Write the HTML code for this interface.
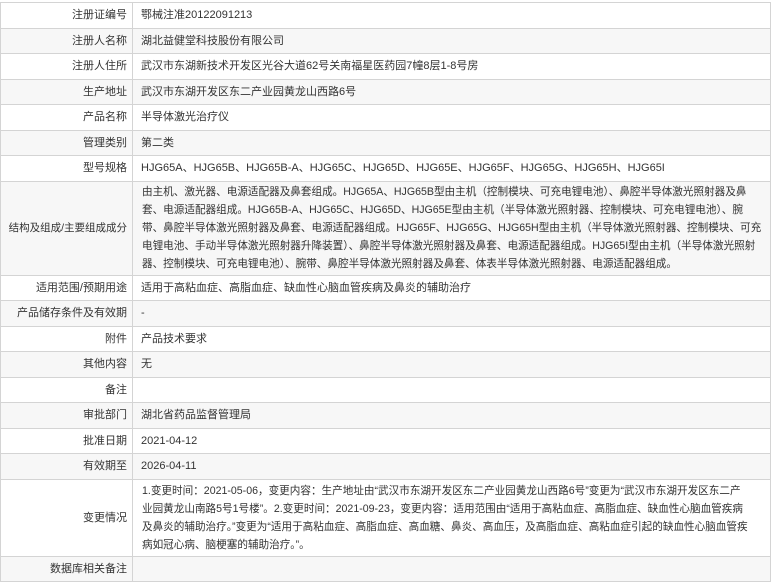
<!DOCTYPE html>
<html><head><meta charset="utf-8"><style>
body{margin:0;background:#fff;font-family:"Liberation Sans","Noto Sans CJK SC",sans-serif;font-size:11px;color:#333;}
table{position:absolute;left:0;top:2px;width:771px;border-collapse:collapse;table-layout:fixed;}
td{border:1px solid #d4d4d4;padding:0 8px;line-height:18px;vertical-align:middle;overflow:hidden;white-space:nowrap;}
td.l{text-align:right;padding:0 5px 0 0;}
td.t{font-size:10.6px;padding-left:9px;}
tr:nth-child(even) td{background:#f7f7f7;}
tr.r td{height:24.5px;}
</style></head><body>
<table>
<colgroup><col style="width:132px"><col></colgroup>
<tr class="r"><td class="l">注册证编号</td><td>鄂械注准20122091213</td></tr>
<tr class="r"><td class="l">注册人名称</td><td>湖北益健堂科技股份有限公司</td></tr>
<tr class="r"><td class="l">注册人住所</td><td>武汉市东湖新技术开发区光谷大道62号关南福星医药园7幢8层1-8号房</td></tr>
<tr class="r"><td class="l">生产地址</td><td>武汉市东湖开发区东二产业园黄龙山西路6号</td></tr>
<tr class="r"><td class="l">产品名称</td><td>半导体激光治疗仪</td></tr>
<tr class="r"><td class="l">管理类别</td><td>第二类</td></tr>
<tr class="r"><td class="l">型号规格</td><td>HJG65A、HJG65B、HJG65B-A、HJG65C、HJG65D、HJG65E、HJG65F、HJG65G、HJG65H、HJG65I</td></tr>
<tr><td class="l" style="height:93px;font-size:10.5px">结构及组成/主要组成成分</td><td class="t">由主机、激光器、电源适配器及鼻套组成。HJG65A、HJG65B型由主机（控制模块、可充电锂电池）、鼻腔半导体激光照射器及鼻<br>套、电源适配器组成。HJG65B-A、HJG65C、HJG65D、HJG65E型由主机（半导体激光照射器、控制模块、可充电锂电池）、腕<br>带、鼻腔半导体激光照射器及鼻套、电源适配器组成。HJG65F、HJG65G、HJG65H型由主机（半导体激光照射器、控制模块、可充<br>电锂电池、手动半导体激光照射器升降装置）、鼻腔半导体激光照射器及鼻套、电源适配器组成。HJG65I型由主机（半导体激光照射<br>器、控制模块、可充电锂电池）、腕带、鼻腔半导体激光照射器及鼻套、体表半导体激光照射器、电源适配器组成。</td></tr>
<tr class="r"><td class="l">适用范围/预期用途</td><td>适用于高粘血症、高脂血症、缺血性心脑血管疾病及鼻炎的辅助治疗</td></tr>
<tr class="r"><td class="l">产品储存条件及有效期</td><td>-</td></tr>
<tr class="r"><td class="l">附件</td><td>产品技术要求</td></tr>
<tr class="r"><td class="l">其他内容</td><td>无</td></tr>
<tr class="r"><td class="l">备注</td><td></td></tr>
<tr class="r"><td class="l">审批部门</td><td>湖北省药品监督管理局</td></tr>
<tr class="r"><td class="l">批准日期</td><td>2021-04-12</td></tr>
<tr class="r"><td class="l">有效期至</td><td>2026-04-11</td></tr>
<tr><td class="l" style="height:76px">变更情况</td><td class="t">1.变更时间：2021-05-06，变更内容：生产地址由“武汉市东湖开发区东二产业园黄龙山西路6号”变更为“武汉市东湖开发区东二产<br>业园黄龙山南路5号1号楼”。2.变更时间：2021-09-23，变更内容：适用范围由“适用于高粘血症、高脂血症、缺血性心脑血管疾病<br>及鼻炎的辅助治疗。”变更为“适用于高粘血症、高脂血症、高血糖、鼻炎、高血压，及高脂血症、高粘血症引起的缺血性心脑血管疾<br>病如冠心病、脑梗塞的辅助治疗。”。</td></tr>
<tr class="r"><td class="l">数据库相关备注</td><td></td></tr>
</table>
</body></html>
